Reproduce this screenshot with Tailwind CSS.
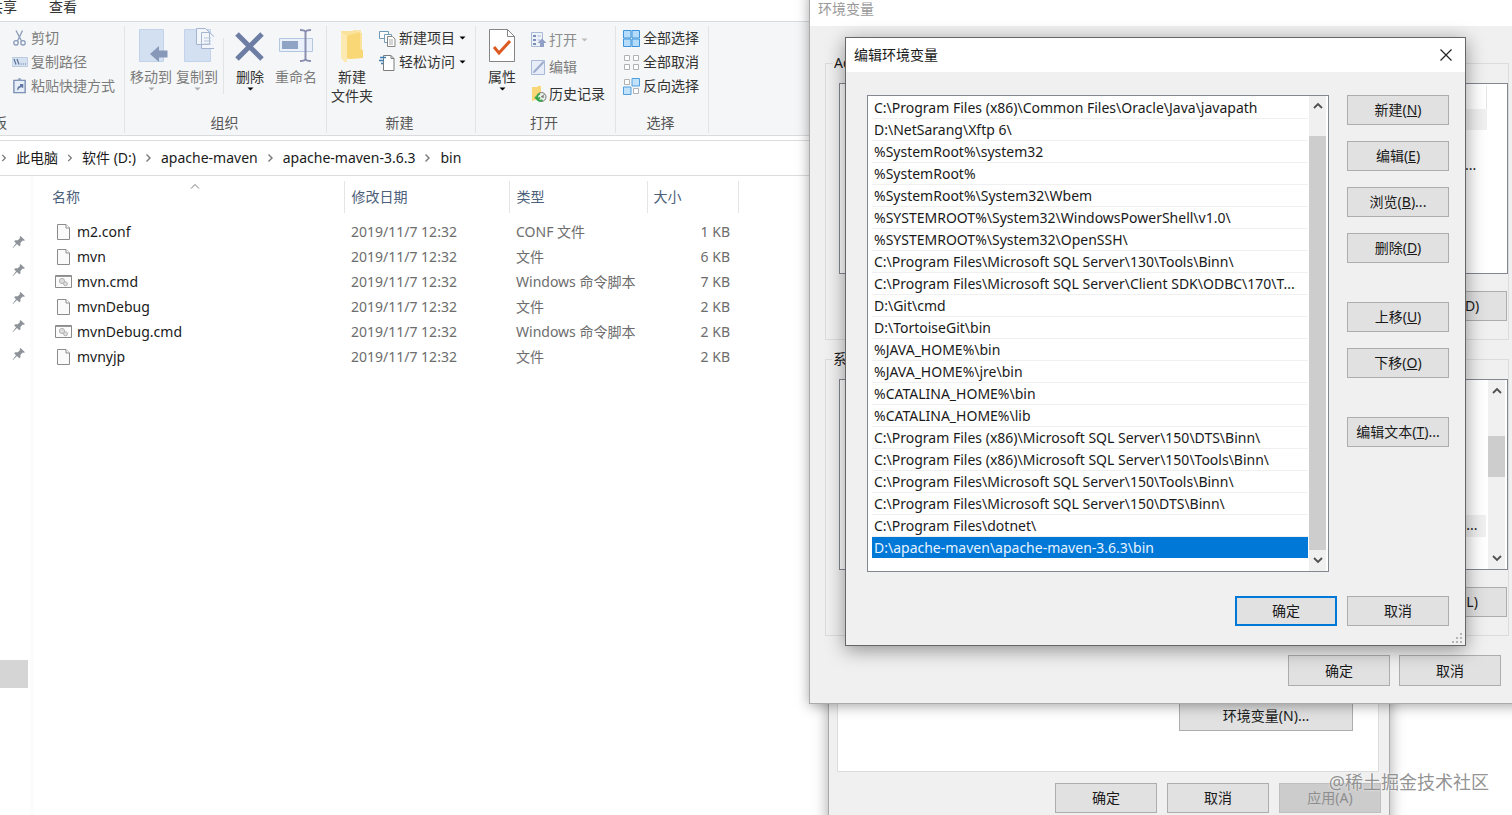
<!DOCTYPE html>
<html lang="zh-CN">
<head>
<meta charset="utf-8">
<title>编辑环境变量</title>
<script src="https://cdn.jsdelivr.net/npm/@tailwindcss/browser@4"></script>
</head>
<body class="relative h-screen overflow-hidden bg-white font-['Noto_Sans','Noto_Sans_CJK_SC',sans-serif] text-[14px] leading-5 text-[#1a1a1a]">

<svg class="hidden" aria-hidden="true">
  <symbol id="chev-r" viewBox="0 0 9 12"><path d="M2.500 2.500 6 6 2.500 9.500" fill="none" stroke="#777" stroke-width="1.400"/></symbol>
  <symbol id="chev-u" viewBox="0 0 12 12"><path d="M2 8 6 4l4 4" fill="none" stroke="#505050" stroke-width="1.800"/></symbol>
  <symbol id="chev-d" viewBox="0 0 12 12"><path d="M2 4l4 4 4-4" fill="none" stroke="#505050" stroke-width="1.800"/></symbol>
  <symbol id="tri" viewBox="0 0 6 4"><path d="M0 .5h6L3 3.500z" fill="currentColor"/></symbol>
  <symbol id="pin" viewBox="0 0 14 14"><path d="M8.500 1 13 5.200l-1.300.6-1-.2-2.300 2.300.1 2.400-1.200 1L5 9 1 13l-.4-.3L4 8.300 2.200 6.300l1-1.100 2.600.1 2.200-2.300-.3-1z" fill="#8d9399"/></symbol>
  <symbol id="doc" viewBox="0 0 16 18"><path d="M2.500 1.500h8.500l3.500 3.500v11.500h-12z" fill="#fafafa" stroke="#8c8c8c"/><path d="M11 1.500V5h3.500" fill="#fff" stroke="#8c8c8c"/></symbol>
  <symbol id="cmd" viewBox="0 0 18 14"><path d="M.5.500h16v12H.5z" fill="#fbfbfb" stroke="#8a8a8a"/><path d="M.5 1.500h16" stroke="#999"/><circle cx="7" cy="6" r="2.600" fill="#dcdcdc" stroke="#b5b5b5"/><circle cx="10.500" cy="8.800" r="2" fill="#dcdcdc" stroke="#b5b5b5"/></symbol>
</svg>

<!-- File explorer -->
<main class="flex h-full flex-col">
  <nav class="flex h-[21px] shrink-0 items-start gap-8 text-[#333]">
    <a href="#" class="-ml-[11px] -mt-[3px]">共享</a>
    <a href="#" class="-mt-[3px]">查看</a>
  </nav>

  <section class="flex h-[115px] shrink-0 border-y border-[#dadbdc] bg-[#f5f6f7] pb-[2px] pt-1" aria-label="功能区">
    <div class="flex w-[125px] flex-col justify-between border-r border-[#e2e3e4] text-[#7c7c7c]">
      <div class="flex flex-col items-start pl-3">
        <button class="flex h-6 items-center gap-[3px] whitespace-nowrap">
          <svg class="size-4" viewBox="0 0 16 16" fill="none" stroke="#8b9cbb" stroke-width="1.300"><path d="M4 .5 9.500 11M10.500.5 5.500 11"/><circle cx="4" cy="12.800" r="2.200"/><circle cx="11" cy="12.800" r="2.200"/></svg>剪切</button>
        <button class="flex h-6 items-center gap-[3px] whitespace-nowrap">
          <svg class="size-4" viewBox="0 0 16 16" fill="none"><path d="M0 3.500h15.500v9H0z" fill="#d5e2f2" stroke="#bccbe0"/><path d="m2 5 2 5.500M5 5l2 5.500M8.500 10h1M10.800 10h1M13 10h1" stroke="#5f7394" stroke-width="1.200"/></svg>复制路径</button>
        <button class="flex h-6 items-center gap-[3px] whitespace-nowrap">
          <svg class="size-4" viewBox="0 0 16 17" fill="none"><path d="M1.500 2.500h12v13h-12z" fill="#e8eef7" stroke="#7d90b5" stroke-width="1.500"/><path d="M5 3V1.500h1.500V0h2v1.500H10V3z" fill="#8c9dbe"/><path d="M5 13c0-3 1-4.500 3-4.500V6.500h3.500V11L10 9.800C8 9.800 6.500 11 6 13z" fill="#6379a5"/></svg>粘贴快捷方式</button>
      </div>
      <div class="-ml-[35px] self-start text-[#555]">剪贴板</div>
    </div>

    <div class="flex w-[202px] flex-col justify-between border-r border-[#e2e3e4] text-[#7c7c7c]">
      <div class="flex">
        <button class="ml-[3px] flex w-[46px] flex-col items-center pt-[2px]">
          <svg class="mb-[2px] h-[37px] w-[34px]" viewBox="0 0 34 37"><path d="M5.500 1.500h24v32h-24z" fill="#d3e0f1" stroke="#c2d3e9"/><path d="M16 26 25 18v4.500h8.500v7H25V34z" fill="#8798b8"/></svg>
          <span class="whitespace-nowrap">移动到</span><svg class="h-1 text-[#aaa]" width="7"><use href="#tri"/></svg>
        </button>
        <button class="flex w-[46px] flex-col items-center pt-[2px]">
          <svg class="mb-[2px] h-[37px] w-[34px]" viewBox="0 0 34 37"><path d="M4.500 1.500h26v32h-26z" fill="#d3e0f1" stroke="#c2d3e9"/><path d="M16.500.500h9l4 4v12h-13zM21.500 4.500h8l5 4.500v11.500h-13z" fill="#f2f6fb" stroke="#a5b5d0"/><path d="M24 10h7M24 13h7M24 16h7" stroke="#b8c5da"/></svg>
          <span class="whitespace-nowrap">复制到</span><svg class="h-1 text-[#aaa]" width="7"><use href="#tri"/></svg>
        </button>
        <div class="mx-[3px] mt-3 h-14 w-px bg-[#e2e3e4]"></div>
        <button class="flex w-[46px] flex-col items-center pt-[2px] text-[#333]">
          <svg class="mb-[2px] h-[37px] w-[34px]" viewBox="0 0 34 37"><path d="M4 6 29 31M29 6 4 31" stroke="#6d7da3" stroke-width="5"/></svg>
          <span>删除</span><svg class="h-1 text-black" width="7"><use href="#tri"/></svg>
        </button>
        <button class="flex w-[46px] flex-col items-center pt-[2px]">
          <svg class="mb-[2px] h-[37px] w-[36px]" viewBox="0 0 36 37" fill="none"><path d="M1.500 10.500h33v13h-33z" fill="#eaf1fa" stroke="#b4c6e0"/><path d="M4 13h16v8H4z" fill="#8fa3c5"/><path d="M22 2c3 0 5 .5 5.500 2C28 2.500 30 2 33 2M27.500 3v29M22 33c3 0 5-.5 5.500-2 .5 1.500 2.500 2 5.500 2" stroke="#8a8fb2" stroke-width="2"/></svg>
          <span class="whitespace-nowrap">重命名</span>
        </button>
      </div>
      <div class="pr-[2px] text-center text-[#555]">组织</div>
    </div>

    <div class="flex w-[149px] flex-col justify-between border-r border-[#e2e3e4] text-[#333]">
      <div class="flex">
        <button class="ml-[1px] flex w-[48px] flex-col items-center pt-[2px]">
          <svg class="mb-[2px] h-[37px] w-[34px]" viewBox="0 0 34 37"><path d="M18 2h8v18h-8z" fill="#fbe7ae"/><path d="M6 3h15l1 2h5v25l-12 1-9-1z" fill="#fbe29b"/><path d="m12 8 13-4v17l3 1v8l-15 1-1-2z" fill="#f9d777"/><path d="M6 4 12 8v26l-2 .5L6 30z" fill="#fdeab2"/></svg>
          <span class="whitespace-nowrap leading-[19px]">新建<br>文件夹</span>
        </button>
        <div class="ml-[3px] flex flex-col items-start">
          <button class="flex h-6 items-center whitespace-nowrap">
            <svg class="mr-[3px] h-[17px] w-[17px]" viewBox="0 0 17 17" fill="#fff"><path d="M.5 1.500h9v7h-9z" stroke="#6d9bb8"/><path d="M5.500 4.500h7v8h-7z" stroke="#799fb9"/><path d="M8.500 6.500h5l2.500 2.500v7.500H8.500z" stroke="#858585"/><path d="M10 10h4M10 12h4M10 14h4" stroke="#aaa"/></svg>新建项目<svg class="ml-1 h-1 text-black" width="7"><use href="#tri"/></svg></button>
          <button class="flex h-6 items-center whitespace-nowrap">
            <svg class="mr-[3px] h-[17px] w-[17px]" viewBox="0 0 17 17" fill="none"><path d="M4.500 1.500H12l3 3v12H4.500z" fill="#fff" stroke="#7d7d7d"/><path d="M12 1.500v3h3" stroke="#7d7d7d"/><path d="M1 3.500h6M0 6.500h5M2 9.500h2" stroke="#3e80b5" stroke-width="1.500"/></svg>轻松访问<svg class="ml-1 h-1 text-black" width="7"><use href="#tri"/></svg></button>
        </div>
      </div>
      <div class="pr-[3px] text-center text-[#555]">新建</div>
    </div>

    <div class="flex w-[140px] flex-col justify-between border-r border-[#e2e3e4] text-[#333]">
      <div class="flex">
        <button class="ml-[2px] flex w-[48px] flex-col items-center pt-[2px]">
          <svg class="mb-[2px] h-[37px] w-[34px]" viewBox="0 0 34 37" fill="none"><path d="M4.500 1.500h18l7 7v25h-25z" fill="#fff" stroke="#858585"/><path d="M22.500 1.500v7h7" stroke="#858585"/><path d="m9 19 5 6L25 13" stroke="#dc5a22" stroke-width="3"/></svg>
          <span>属性</span><svg class="h-1 text-black" width="7"><use href="#tri"/></svg>
        </button>
        <div class="ml-[5px] flex flex-col items-start">
          <button class="flex h-[27px] items-center whitespace-nowrap text-[#8c8c8c]">
            <svg class="mr-[2px] size-4" viewBox="0 0 16 16" fill="none"><path d="M.5.500h11v14H.5z" fill="#eef3fa" stroke="#a9b9d6"/><path d="M2 3h3v2H2zM2 7h3v2H2zM2 11h3v2H2z" fill="#7b8fba"/><path d="M6.500 4H10M6.500 8H9" stroke="#a9b9d6"/><path d="M11 6.500 15.500 11H13v4H9v-4H6.500z" fill="#8f9fc5"/></svg>打开<svg class="ml-1 h-1 text-[#bbb]" width="7"><use href="#tri"/></svg></button>
          <button class="flex h-[27px] items-center whitespace-nowrap text-[#7c7c7c]">
            <svg class="mr-[2px] size-4" viewBox="0 0 16 16" fill="none"><path d="M.5 1.500h13v14H.5z" fill="#e6edf8" stroke="#a9b9d6"/><path d="m2.500 12 9.500-10 1.500 1.500-9.500 10-2 .5z" fill="#9daccd"/></svg>编辑</button>
          <button class="flex h-[27px] items-center whitespace-nowrap">
            <svg class="mr-[2px] size-4" viewBox="0 0 16 16" fill="none"><path d="M1 1h5l1-1h3v12l-6 2-3 1z" fill="#f9d777"/><circle cx="10.500" cy="11" r="4.500" fill="#e9efe9" stroke="#777"/><path d="M10.500 11 13 8.500M10.500 11H13" stroke="#555"/><path d="M9 7.500C6.500 8.500 5.500 10.500 6.500 13M4 11l2.500 2.500L9 11.500M6.500 13.500c1.500 1.500 3.500 1.500 5 .5" stroke="#35a64a" stroke-width="1.800"/></svg>历史记录</button>
        </div>
      </div>
      <div class="pr-[3px] text-center text-[#555]">打开</div>
    </div>

    <div class="flex w-[93px] flex-col justify-between border-r border-[#e2e3e4] text-[#333]">
      <div class="flex flex-col items-start pl-[7px]">
        <button class="flex h-6 items-center gap-[3px] whitespace-nowrap">
          <svg class="size-[17px]" viewBox="0 0 17 17" fill="#b5dcfa" stroke="#3d96dd"><path d="M.5.500h7.500v7.500H.5zM9 .5h7.500v7.500H9zM.5 9h7.500v7.500H.5zM9 9h7.500v7.500H9z"/></svg>全部选择</button>
        <button class="flex h-6 items-center gap-[3px] whitespace-nowrap">
          <svg class="size-[17px]" viewBox="0 0 17 17" fill="#fff" stroke="#b2b2b2"><path d="M1.500 1.500h5v5h-5zM10.500 1.500h5v5h-5zM1.500 10.500h5v5h-5zM10.500 10.500h5v5h-5z"/></svg>全部取消</button>
        <button class="flex h-6 items-center gap-[3px] whitespace-nowrap">
          <svg class="size-[17px]" viewBox="0 0 17 17" fill="#c2e2fb" stroke="#4f9fdf"><path d="M9 .5h7.500v7.500H9zM.5 9h7.500v7.500H.5z"/><path d="M1.500 1.500h5v5h-5zM10.500 10.500h5v5h-5z" fill="#fff" stroke="#b2b2b2"/></svg>反向选择</button>
      </div>
      <div class="pr-[3px] text-center text-[#555]">选择</div>
    </div>
  </section>

  <nav class="mt-1 flex h-[36px] shrink-0 items-center gap-2 border-y border-[#dcdcdc] whitespace-nowrap" aria-label="地址栏">
    <svg class="h-3 w-[8px]"><use href="#chev-r"/></svg>
    <a href="#">此电脑</a>
    <svg class="h-3 w-[8px]"><use href="#chev-r"/></svg>
    <a href="#">软件 (D:)</a>
    <svg class="h-3 w-[9px]"><use href="#chev-r"/></svg>
    <a href="#">apache-maven</a>
    <svg class="h-3 w-[9px]"><use href="#chev-r"/></svg>
    <a href="#">apache-maven-3.6.3</a>
    <svg class="h-3 w-[9px]"><use href="#chev-r"/></svg>
    <a href="#">bin</a>
  </nav>

  <div class="flex min-h-0 flex-1">
    <aside class="flex w-[34px] shrink-0 flex-col border-r-4 border-[#fcfcfc] pt-[52px]" aria-label="快速访问">
      <div class="flex h-7 items-center pl-3"><svg class="size-[14px]"><use href="#pin"/></svg></div>
      <div class="flex h-7 items-center pl-3"><svg class="size-[14px]"><use href="#pin"/></svg></div>
      <div class="flex h-7 items-center pl-3"><svg class="size-[14px]"><use href="#pin"/></svg></div>
      <div class="flex h-7 items-center pl-3"><svg class="size-[14px]"><use href="#pin"/></svg></div>
      <div class="flex h-7 items-center pl-3"><svg class="size-[14px]"><use href="#pin"/></svg></div>
      <div class="mt-[292px] h-7 w-7 bg-[#d5d5d5]"></div>
    </aside>
    <div class="pl-[9px] pt-[5px]">
      <table class="table-fixed w-[695px] border-collapse text-left text-[#6d6d6d]">
        <colgroup><col class="w-[301px]"><col class="w-[165px]"><col class="w-[138px]"><col class="w-[91px]"></colgroup>
        <thead class="text-[#4c607a]">
          <tr class="h-8">
            <th class="relative border-r border-[#e5e5e5] pl-[9px] font-normal">名称<svg class="absolute left-[146px] top-0 h-3 w-3" viewBox="0 0 12 12"><path d="M2 7.500 6 3.500l4 4" fill="none" stroke="#777"/></svg></th>
            <th class="border-r border-[#e5e5e5] pl-[7px] font-normal">修改日期</th>
            <th class="border-r border-[#e5e5e5] pl-[7px] font-normal">类型</th>
            <th class="border-r border-[#e5e5e5] pl-[6px] font-normal">大小</th>
          </tr>
          <tr class="h-[6px]"><td colspan="4"></td></tr>
        </thead>
        <tbody>
          <tr class="h-[25px]"><td class="pl-3 text-[#1a1a1a]"><div class="flex items-center gap-[5px]"><svg class="h-[18px] w-[17px]"><use href="#doc" width="16" height="18"/></svg>m2.conf</div></td><td class="pl-[7px]">2019/11/7 12:32</td><td class="pl-[7px]">CONF 文件</td><td class="pr-2 text-right">1 KB</td></tr>
          <tr class="h-[25px]"><td class="pl-3 text-[#1a1a1a]"><div class="flex items-center gap-[5px]"><svg class="h-[18px] w-[17px]"><use href="#doc" width="16" height="18"/></svg>mvn</div></td><td class="pl-[7px]">2019/11/7 12:32</td><td class="pl-[7px]">文件</td><td class="pr-2 text-right">6 KB</td></tr>
          <tr class="h-[25px]"><td class="pl-3 text-[#1a1a1a]"><div class="flex items-center gap-[5px]"><svg class="h-[14px] w-[17px]"><use href="#cmd" width="18" height="14"/></svg>mvn.cmd</div></td><td class="pl-[7px]">2019/11/7 12:32</td><td class="pl-[7px]">Windows 命令脚本</td><td class="pr-2 text-right">7 KB</td></tr>
          <tr class="h-[25px]"><td class="pl-3 text-[#1a1a1a]"><div class="flex items-center gap-[5px]"><svg class="h-[18px] w-[17px]"><use href="#doc" width="16" height="18"/></svg>mvnDebug</div></td><td class="pl-[7px]">2019/11/7 12:32</td><td class="pl-[7px]">文件</td><td class="pr-2 text-right">2 KB</td></tr>
          <tr class="h-[25px]"><td class="pl-3 text-[#1a1a1a]"><div class="flex items-center gap-[5px]"><svg class="h-[14px] w-[17px]"><use href="#cmd" width="18" height="14"/></svg>mvnDebug.cmd</div></td><td class="pl-[7px]">2019/11/7 12:32</td><td class="pl-[7px]">Windows 命令脚本</td><td class="pr-2 text-right">2 KB</td></tr>
          <tr class="h-[25px]"><td class="pl-3 text-[#1a1a1a]"><div class="flex items-center gap-[5px]"><svg class="h-[18px] w-[17px]"><use href="#doc" width="16" height="18"/></svg>mvnyjp</div></td><td class="pl-[7px]">2019/11/7 12:32</td><td class="pl-[7px]">文件</td><td class="pr-2 text-right">2 KB</td></tr>
        </tbody>
      </table>
    </div>
  </div>
</main>

<!-- System properties window -->
<section class="absolute left-[828px] top-[660px] flex w-[562px] flex-col border border-[#aaa] bg-[#f0f0f0] pb-5 pl-2 pr-[10px] shadow-[0_4px_14px_rgba(0,0,0,0.35)]" aria-label="系统属性">
  <div class="flex justify-end border border-[#dcdcdc] bg-white pb-10 pr-[25px] pt-[39px]">
    <button class="h-[30px] w-[174px] border border-[#adadad] bg-[#e1e1e1]">环境变量(N)...</button>
  </div>
  <div class="-mr-[2px] mt-[11px] flex justify-end gap-[10px]">
    <button class="h-[30px] w-[102px] border border-[#adadad] bg-[#e1e1e1]">确定</button>
    <button class="h-[30px] w-[102px] border border-[#adadad] bg-[#e1e1e1]">取消</button>
    <button class="h-[30px] w-[102px] border border-[#bfbfbf] bg-[#cccccc] text-[#8e8e8e]" disabled>应用(A)</button>
  </div>
</section>

<!-- Environment variables window -->
<section class="absolute -right-3 left-[809px] top-[-10px] flex flex-col border border-[#aaa] bg-[#f0f0f0] pb-[17px] shadow-[0_2px_12px_rgba(0,0,0,0.35)]" aria-label="环境变量">
  <header class="h-[35px] bg-white pl-2 pt-2 text-[#999]">环境变量</header>
  <div class="flex flex-col px-[15px] pt-[27px]">
    <fieldset class="h-[287px] border border-[#dcdcdc] pl-[13px]" aria-label="用户变量">
      <legend class="-ml-[6px] h-5 px-[1px]">Ad</legend>
      <div class="mt-[10px] flex h-[191px] w-[669px] justify-end border border-[#828790] bg-white">
        <div class="mr-5 w-[38px]">
          <div class="mt-[2px] h-[23px] border-r border-[#e5e5e5]"></div>
          <div class="h-[21px] bg-[#f0f0f0]"></div>
          <div class="mt-[25px] pl-4">...</div>
        </div>
      </div>
      <div class="mt-[17px] flex w-[668px] justify-end">
        <button class="h-[30px] w-[102px] border border-[#adadad] bg-[#e1e1e1]">删除(D)</button>
      </div>
    </fieldset>
    <fieldset class="mt-[9px] h-[287px] border border-[#dcdcdc] pl-[13px]" aria-label="系统变量">
      <legend class="-ml-[7px] h-5 px-[1px]">系</legend>
      <div class="mt-[10px] flex h-[191px] w-[669px] justify-end border border-[#828790] bg-white">
        <div class="flex w-[38px] flex-col justify-end pb-[32px]"><div class="h-[22px] bg-[#f0f0f0] pl-[14px]">)...</div></div>
        <div class="mx-[2px] flex w-[17px] flex-col items-center justify-between bg-[#f0f0f0] py-[5px]">
          <button aria-label="向上滚动"><svg class="block size-3"><use href="#chev-u"/></svg></button>
          <div class="-mt-9 h-[41px] w-full bg-[#cdcdcd]"></div>
          <button aria-label="向下滚动"><svg class="block size-3"><use href="#chev-d"/></svg></button>
        </div>
      </div>
      <div class="mt-[17px] flex w-[668px] justify-end">
        <button class="h-[30px] w-[102px] border border-[#adadad] bg-[#e1e1e1]">删除(L)</button>
      </div>
    </fieldset>
    <div class="mt-[19px] flex justify-end gap-[9px] pr-[7px]">
      <button class="h-[31px] w-[102px] border border-[#adadad] bg-[#e1e1e1]">确定</button>
      <button class="h-[31px] w-[102px] border border-[#adadad] bg-[#e1e1e1]">取消</button>
    </div>
  </div>
</section>

<!-- Edit environment variable dialog -->
<section role="dialog" aria-labelledby="dlg-title" class="absolute left-[845px] top-[37px] flex w-[621px] flex-col border border-[#666] bg-[#f0f0f0] shadow-[0_4px_18px_rgba(0,0,0,0.4)]">
  <header class="flex h-[34px] items-center justify-between bg-white pl-2 pr-3">
    <h1 id="dlg-title" class="text-[14px]">编辑环境变量</h1>
    <button aria-label="关闭"><svg class="block size-[14px]" viewBox="0 0 14 14"><path d="m1.500 1.500 11 11m0-11-11 11" stroke="#222" stroke-width="1.200"/></svg></button>
  </header>
  <div class="flex justify-between pl-[21px] pr-4 pt-[23px]">
    <div class="flex h-[477px] w-[462px] border border-[#828790] bg-white pr-[2px]">
      <ul role="listbox" aria-label="路径" class="min-w-0 flex-1 pl-1 pr-[1px] pt-[1px]">
        <li class="h-[22px] truncate border-b border-[#f0f0f0] pl-[2px] leading-[22px]">C:\Program Files (x86)\Common Files\Oracle\Java\javapath</li>
        <li class="h-[22px] truncate border-b border-[#f0f0f0] pl-[2px] leading-[22px]">D:\NetSarang\Xftp 6\</li>
        <li class="h-[22px] truncate border-b border-[#f0f0f0] pl-[2px] leading-[22px]">%SystemRoot%\system32</li>
        <li class="h-[22px] truncate border-b border-[#f0f0f0] pl-[2px] leading-[22px]">%SystemRoot%</li>
        <li class="h-[22px] truncate border-b border-[#f0f0f0] pl-[2px] leading-[22px]">%SystemRoot%\System32\Wbem</li>
        <li class="h-[22px] truncate border-b border-[#f0f0f0] pl-[2px] leading-[22px]">%SYSTEMROOT%\System32\WindowsPowerShell\v1.0\</li>
        <li class="h-[22px] truncate border-b border-[#f0f0f0] pl-[2px] leading-[22px]">%SYSTEMROOT%\System32\OpenSSH\</li>
        <li class="h-[22px] truncate border-b border-[#f0f0f0] pl-[2px] leading-[22px]">C:\Program Files\Microsoft SQL Server\130\Tools\Binn\</li>
        <li class="h-[22px] truncate border-b border-[#f0f0f0] pl-[2px] leading-[22px]">C:\Program Files\Microsoft SQL Server\Client SDK\ODBC\170\T...</li>
        <li class="h-[22px] truncate border-b border-[#f0f0f0] pl-[2px] leading-[22px]">D:\Git\cmd</li>
        <li class="h-[22px] truncate border-b border-[#f0f0f0] pl-[2px] leading-[22px]">D:\TortoiseGit\bin</li>
        <li class="h-[22px] truncate border-b border-[#f0f0f0] pl-[2px] leading-[22px]">%JAVA_HOME%\bin</li>
        <li class="h-[22px] truncate border-b border-[#f0f0f0] pl-[2px] leading-[22px]">%JAVA_HOME%\jre\bin</li>
        <li class="h-[22px] truncate border-b border-[#f0f0f0] pl-[2px] leading-[22px]">%CATALINA_HOME%\bin</li>
        <li class="h-[22px] truncate border-b border-[#f0f0f0] pl-[2px] leading-[22px]">%CATALINA_HOME%\lib</li>
        <li class="h-[22px] truncate border-b border-[#f0f0f0] pl-[2px] leading-[22px]">C:\Program Files (x86)\Microsoft SQL Server\150\DTS\Binn\</li>
        <li class="h-[22px] truncate border-b border-[#f0f0f0] pl-[2px] leading-[22px]">C:\Program Files (x86)\Microsoft SQL Server\150\Tools\Binn\</li>
        <li class="h-[22px] truncate border-b border-[#f0f0f0] pl-[2px] leading-[22px]">C:\Program Files\Microsoft SQL Server\150\Tools\Binn\</li>
        <li class="h-[22px] truncate border-b border-[#f0f0f0] pl-[2px] leading-[22px]">C:\Program Files\Microsoft SQL Server\150\DTS\Binn\</li>
        <li class="h-[22px] truncate border-b border-[#f0f0f0] pl-[2px] leading-[22px]">C:\Program Files\dotnet\</li>
        <li class="h-[22px] truncate border-b border-white bg-[#0078d7] pl-[2px] leading-[22px] text-[#e6f3ff]" role="option" aria-selected="true">D:\apache-maven\apache-maven-3.6.3\bin</li>
      </ul>
      <div class="flex w-[17px] flex-col items-center bg-[#f0f0f0] pb-[5px] pt-1">
        <button aria-label="向上滚动"><svg class="block size-3"><use href="#chev-u"/></svg></button>
        <div class="mb-1 mt-6 w-full flex-1 bg-[#cdcdcd]"></div>
        <button aria-label="向下滚动"><svg class="block size-3"><use href="#chev-d"/></svg></button>
      </div>
    </div>
    <div class="flex w-[102px] flex-col gap-4">
      <button class="h-[30px] border border-[#adadad] bg-[#e1e1e1]">新建(<u>N</u>)</button>
      <button class="h-[30px] border border-[#adadad] bg-[#e1e1e1]">编辑(<u>E</u>)</button>
      <button class="h-[30px] border border-[#adadad] bg-[#e1e1e1]">浏览(<u>B</u>)...</button>
      <button class="h-[30px] border border-[#adadad] bg-[#e1e1e1]">删除(<u>D</u>)</button>
      <button class="mt-[23px] h-[30px] border border-[#adadad] bg-[#e1e1e1]">上移(<u>U</u>)</button>
      <button class="h-[30px] border border-[#adadad] bg-[#e1e1e1]">下移(<u>O</u>)</button>
      <button class="mt-[23px] h-[30px] border border-[#adadad] bg-[#e1e1e1]">编辑文本(<u>T</u>)...</button>
    </div>
  </div>
  <div class="mt-6 flex justify-end gap-[10px] pr-4">
    <button class="h-[30px] w-[102px] border-2 border-[#0078d7] bg-[#e1e1e1]">确定</button>
    <button class="h-[30px] w-[102px] border border-[#adadad] bg-[#e1e1e1]">取消</button>
  </div>
  <div class="flex h-[19px] items-end justify-end pb-[1px] pr-[2px]">
    <svg class="size-[11px]" viewBox="0 0 11 11" fill="#b5b5b5"><path d="M8 0h2v2H8zM8 4h2v2H8zM4 4h2v2H4zM8 8h2v2H8zM4 8h2v2H4zM0 8h2v2H0z"/></svg>
  </div>
</section>

<div class="absolute bottom-[21px] right-[23px] text-[18px] leading-6 text-[#858585]/90 [text-shadow:0_0_2px_#fff]">@稀土掘金技术社区</div>
</body>
</html>
